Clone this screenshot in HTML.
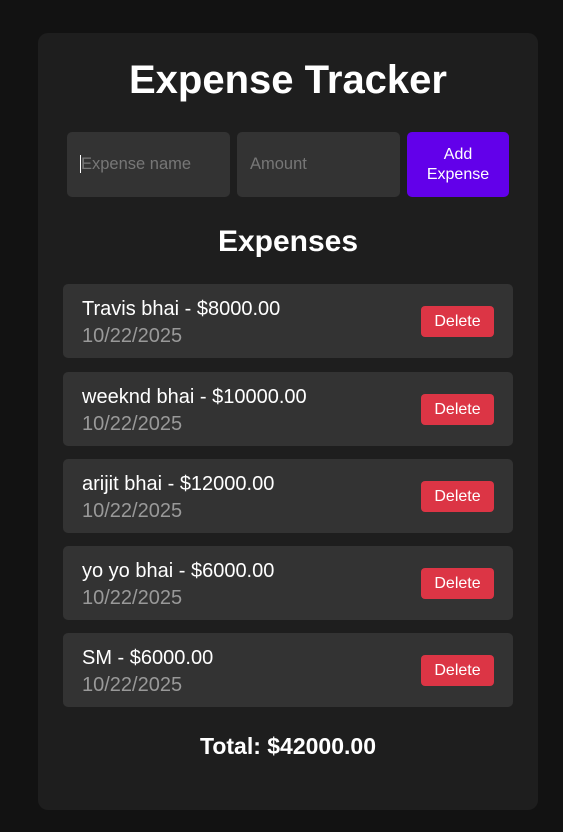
<!DOCTYPE html>
<html><head><style>
*{box-sizing:border-box;margin:0;padding:0}
body{width:563px;height:832px;background:#121212;font-family:"Liberation Sans",sans-serif;color:#fff;position:relative;overflow:hidden}
.c{position:absolute;left:38px;top:33px;width:500px;height:777px;background:#1e1e1e;border-radius:10px}
h1{position:absolute;top:24px;width:100%;text-align:center;font-size:40px;line-height:46px}
.in{position:absolute;top:99px;height:65px;background:#333;border-radius:5px;color:#777;font-size:16.5px;line-height:65px;padding-left:13px}
.btn{position:absolute;top:99px;left:369px;width:102px;height:65px;background:#6200ea;border-radius:5px;font-size:16px;text-align:center;padding-top:13px;line-height:20px}
h2{position:absolute;top:191px;width:100%;text-align:center;font-size:30px;line-height:36px}
.it{position:absolute;left:25px;width:450px;height:74px;background:#333;border-radius:5px}
.n{position:absolute;left:19px;top:13px;font-size:20px;line-height:24px}
.d{position:absolute;left:19px;top:40px;font-size:20px;line-height:24px;color:#999}
.del{position:absolute;left:358px;top:22px;width:73px;height:31px;background:#dc3545;border-radius:4px;font-size:16px;line-height:31px;text-align:center}
.t{position:absolute;top:700px;width:100%;text-align:center;font-size:23px;font-weight:bold;line-height:26px}
</style></head><body>
<div class="c">
<h1>Expense Tracker</h1>
<div class="in" style="left:29px;width:163px"><span style="border-left:1px solid #fff;color:#777">Expense name</span></div>
<div class="in" style="left:199px;width:163px">Amount</div>
<div class="btn">Add<br>Expense</div>
<h2>Expenses</h2>
<div class="it" style="top:251px"><div class="n">Travis bhai - $8000.00</div><div class="d">10/22/2025</div><div class="del">Delete</div></div>
<div class="it" style="top:339px"><div class="n">weeknd bhai - $10000.00</div><div class="d">10/22/2025</div><div class="del">Delete</div></div>
<div class="it" style="top:426px"><div class="n">arijit bhai - $12000.00</div><div class="d">10/22/2025</div><div class="del">Delete</div></div>
<div class="it" style="top:513px"><div class="n">yo yo bhai - $6000.00</div><div class="d">10/22/2025</div><div class="del">Delete</div></div>
<div class="it" style="top:600px"><div class="n">SM - $6000.00</div><div class="d">10/22/2025</div><div class="del">Delete</div></div>
<div class="t">Total: $42000.00</div>
</div>
</body></html>
